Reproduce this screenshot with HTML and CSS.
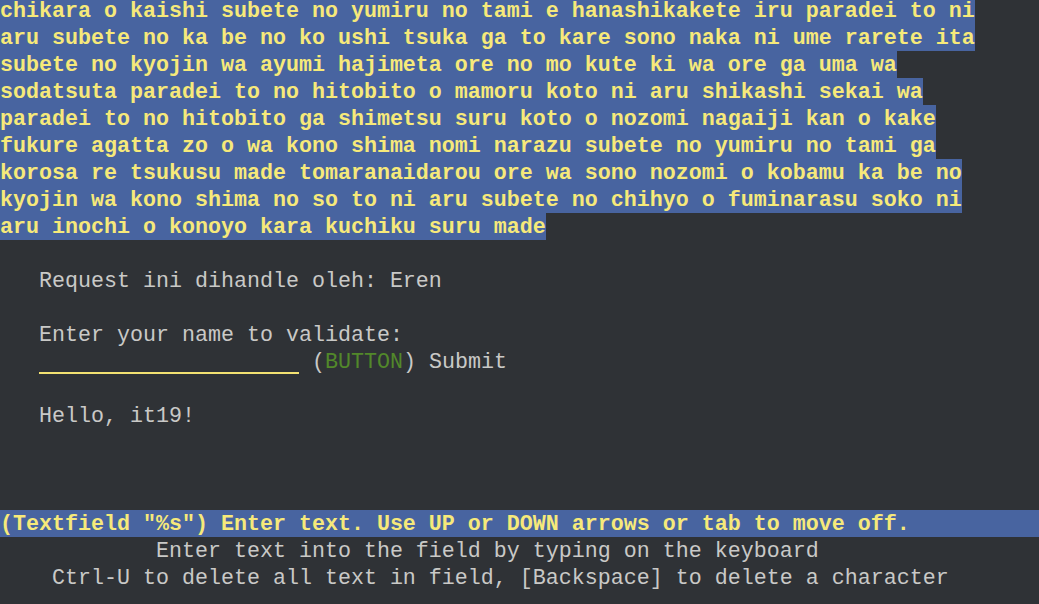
FILE: index.html
```html
<!DOCTYPE html>
<html>
<head>
<meta charset="utf-8">
<link rel="stylesheet" href="styles.css">
</head>
<body>
<div class="term">
<div class="line hl">chikara o kaishi subete no yumiru no tami e hanashikakete iru paradei to ni</div>
<div class="line hl">aru subete no ka be no ko ushi tsuka ga to kare sono naka ni ume rarete ita</div>
<div class="line hl">subete no kyojin wa ayumi hajimeta ore no mo kute ki wa ore ga uma wa</div>
<div class="line hl">sodatsuta paradei to no hitobito o mamoru koto ni aru shikashi sekai wa</div>
<div class="line hl">paradei to no hitobito ga shimetsu suru koto o nozomi nagaiji kan o kake</div>
<div class="line hl">fukure agatta zo o wa kono shima nomi narazu subete no yumiru no tami ga</div>
<div class="line hl">korosa re tsukusu made tomaranaidarou ore wa sono nozomi o kobamu ka be no</div>
<div class="line hl">kyojin wa kono shima no so to ni aru subete no chihyo o fuminarasu soko ni</div>
<div class="line hl">aru inochi o konoyo kara kuchiku suru made</div>
<div class="line"> </div>
<div class="line">   Request ini dihandle oleh: Eren</div>
<div class="line"> </div>
<div class="line">   Enter your name to validate:</div>
<div class="line">   <span class="field"></span> <span class="paren">(</span><span class="btn">BUTTON</span><span class="paren">)</span> Submit</div>
<div class="line"> </div>
<div class="line">   Hello, it19!</div>
<div class="line"> </div>
<div class="line"> </div>
<div class="line"> </div>
<div class="line status">(Textfield "%s") Enter text. Use UP or DOWN arrows or tab to move off.</div>
<div class="line">            Enter text into the field by typing on the keyboard</div>
<div class="line">    Ctrl-U to delete all text in field, [Backspace] to delete a character</div>
</div>
</body>
</html>
```

FILE: styles.css
```css
html, body {
  margin: 0;
  padding: 0;
  background: #2f3236;
  height: 100%;
  overflow: hidden;
}
.term {
  margin-top: -3px;
  font-family: "Liberation Mono", "Courier New", monospace;
  font-size: 21.667px;
  color: #c9c9c7;
}
.line {
  box-sizing: border-box;
  height: 27px;
  padding-top: 2px;
  line-height: 25px;
  white-space: pre;
}
.hl {
  width: max-content;
  background: #4864a0;
  color: #f6e97a;
  font-weight: bold;
}
.status {
  background: #4864a0;
  color: #f6e97a;
  font-weight: bold;
}
.field {
  display: inline-block;
  width: 260px;
  height: 22px;
  border-bottom: 2px solid #f3e172;
  vertical-align: top;
}
.btn {
  color: #52882a;
}
.paren {
  color: #c9c9c7;
}
```
